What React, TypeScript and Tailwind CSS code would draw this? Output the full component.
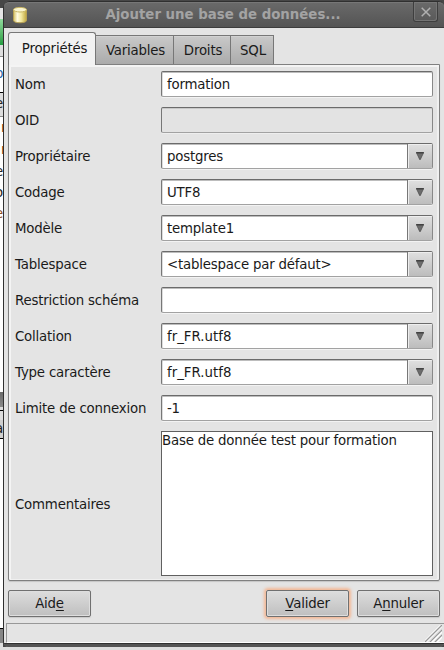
import React from "react";

const sans = "font-['DejaVu_Sans','Noto_Sans',sans-serif]";

function Label({ children, className = "pt-px" }: { children: React.ReactNode; className?: string }) {
  return <label className={`w-[146px] shrink-0 whitespace-nowrap ${className}`}>{children}</label>;
}

const box =
  "h-[26px] w-[272px] rounded-[2px] border border-t-[#6b6b6b] border-l-[#777] border-r-[#888] border-b-[#a2a2a2]";

function Field({
  label,
  value,
  disabled,
  combo,
  wide,
}: {
  label: string;
  value?: string;
  disabled?: boolean;
  combo?: boolean;
  wide?: boolean;
}) {
  return (
    <div className="flex h-[26px] items-center">
      <Label>{label}</Label>
      <div
        className={`${box} flex items-center overflow-hidden ${
          disabled
            ? "bg-[#e3e3e3] shadow-[0_1px_0_#eeeeee,inset_0_1px_0_#c8c8c8]"
            : "bg-white shadow-[0_1px_0_#f3f3f3,inset_0_1px_0_#bdbdbd,inset_1px_0_0_#dddddd]"
        }`}
      >
        <span className={`flex-1 whitespace-pre pt-px pl-[5px] ${wide ? "tracking-normal" : ""}`}>{value}</span>
        {combo && (
          <span className="flex h-full w-[25px] items-center justify-center border-l border-[#777] bg-linear-to-b from-[#e0e0e0] to-[#bcbcbc] shadow-[inset_1px_1px_0_#eeeeee]">
            <svg width="8" height="8" viewBox="0 0 8 8">
              <path d="M0 0h8L4.4 8h-.8z" fill="#6c6c6c" />
              <path d="M0 0h8l-.7 1.6H.7z" fill="#424242" />
              <path d="M.5 1L3.8 7.6M7.5 1L4.2 7.6" fill="none" stroke="#4d4d4d" strokeWidth=".6" />
            </svg>
          </span>
        )}
      </div>
    </div>
  );
}

function Tab({ children, className }: { children: React.ReactNode; className: string }) {
  return (
    <div
      className={`flex h-[29px] items-center justify-center border-t border-r border-[#777] bg-linear-to-b from-[#c9c9c9] to-[#ababab] pt-px pl-[2px] shadow-[inset_0_1px_0_#d2d2d2] ${className}`}
    >
      {children}
    </div>
  );
}

function Button({ children, focus, className = "" }: { children: React.ReactNode; focus?: boolean; className?: string }) {
  return (
    <button
      className={`h-[27px] w-[83px] rounded-[2px] border border-[#707070] bg-linear-to-b from-[#dddddd] to-[#bfbfbf] ${
        focus ? "shadow-[inset_0_0_0_1px_#dedede,0_0_3px_2px_#f3b896]" : "shadow-[inset_0_0_0_1px_#dedede,0_1px_1px_#c9c9c9]"
      } ${className}`}
    >
      {children}
    </button>
  );
}

const U = ({ children }: { children: React.ReactNode }) => (
  <span className="underline decoration-1 underline-offset-2">{children}</span>
);

/* Sliver of the window that lies behind the dialog. */
function Backdrop() {
  return (
    <div className="flex h-full w-[4px] shrink-0 flex-col overflow-hidden bg-white text-[#222]">
      <div className="h-[8px] shrink-0 bg-[#474747]" />
      <div className="h-[11px] shrink-0 bg-[#e5e5e5]" />
      <div className="h-[26px] shrink-0 bg-linear-to-b from-[#8fdb9d] to-[#1f9c3f]" />
      <div className="h-[12px] shrink-0 border-b border-[#888] bg-[#dedede]" />
      <div className="h-[36px] shrink-0 border-b border-black leading-[34px] text-[#2563a8]"><span className="-ml-[5px]">p</span></div>
      <div className="h-[24px] shrink-0 border-b border-[#888] bg-[#ddd] leading-[22px]"><span className="-ml-[5px]">e</span></div>
      <div className="h-[44px] shrink-0 leading-[22px] text-[#9a4a20]"><span className="ml-px block">r</span><span className="ml-px block">r</span></div>
      <div className="h-[231px] shrink-0 leading-[21px]"><span className="-ml-[5px] block">e</span><span className="-ml-[5px] block">o</span><span className="-ml-[5px] block text-[#8a4a20]">e</span></div>
      <div className="h-[15px] shrink-0 bg-linear-to-b from-[#6a6a6a] to-[#8a8a8a]" />
      <div className="h-[4px] shrink-0 border-b border-black bg-[#ddd]" />
      <div className="h-[9px] shrink-0 bg-[#ddd]" />
      <div className="h-[19px] shrink-0 border-b border-black bg-[#cfcfcf] leading-[17px]"><span className="-ml-[5px]">a</span></div>
      <div className="h-[189px] shrink-0" />
      <div className="h-[15px] shrink-0 border-t border-black bg-[#858585]" />
      <div className="flex-1 bg-[#dedede]" />
    </div>
  );
}

export default function App() {
  return (
    <div className={`${sans} flex h-[650px] w-[444px] overflow-hidden bg-[#dcdcdc] text-[13.33px] leading-4 tracking-[-0.19px] text-[#1a1a1a]`}>
      <Backdrop />
      <div className="-ml-px flex w-[441px] flex-col bg-[#474747]">
        <div className="mt-px flex h-[646px] flex-col rounded-t-[6px] rounded-b-[5px] border-l border-[#303030] bg-[#e4e4e4]">
          <header className="flex h-[27px] shrink-0 items-center rounded-t-[5px] border-t border-b border-t-[#303030] border-b-[#3c3c3c] bg-linear-to-b from-[#6a6a6a] to-[#545454] shadow-[inset_0_1px_0_#777]">
            <svg className="ml-[8px]" width="16" height="18" viewBox="0 0 16 18">
              <defs>
                <linearGradient id="cyl">
                  <stop offset="0" stopColor="#d2bd5c" />
                  <stop offset=".3" stopColor="#fffbe0" />
                  <stop offset=".6" stopColor="#f3e89f" />
                  <stop offset="1" stopColor="#bfa63e" />
                </linearGradient>
              </defs>
              <path d="M1.5 3.5v11c0 3 13 3 13 0v-11" fill="url(#cyl)" stroke="#b6a052" />
              <ellipse cx="8" cy="3.7" rx="6.5" ry="2.3" fill="#faf5cf" stroke="#c9b664" />
            </svg>
            <h1 className="flex-1 pl-[5px] text-center font-bold tracking-normal text-[#a3a3a3]">Ajouter une base de données...</h1>
            <button className="mr-[6px] mb-[5px] flex h-[20px] w-[25px] items-center justify-center rounded-b-[3px] border border-t-0 border-[#3e3e3e] shadow-[inset_-1px_-1px_0_#747474,inset_1px_0_0_#747474]">
              <svg width="10" height="10" viewBox="0 0 10 10"><path d="M.7.7l8.6 8.6M9.3.7L.7 9.3" stroke="#b0b0b0" strokeWidth="1.5" /></svg>
            </button>
          </header>
          <div className="z-10 ml-[4px] flex h-[37px] shrink-0 items-end">
            <div className="flex h-[33px] w-[88px] items-center justify-center rounded-t-[3px] border border-b-0 border-[#777] bg-[#f2f2f2] pb-px pl-[5px]">Propriétés</div>
            <div className="mb-px flex">
              <Tab className="w-[78px]">Variables</Tab>
              <Tab className="w-[57px]">Droits</Tab>
              <Tab className="w-[43px]">SQL</Tab>
            </div>
          </div>
          <main className="-mt-px ml-[4px] flex h-[517px] w-[432px] shrink-0 flex-col gap-[10px] rounded-b-[2px] border border-[#808080] pt-[6px] pl-[6px] shadow-[inset_2px_2px_0_#f4f4f4,inset_-2px_-1px_0_#f0f0f0,0_1px_1px_#c5c5c5]">
            <Field label="Nom" value="formation" />
            <Field label="OID" disabled />
            <Field label="Propriétaire" value="postgres" combo />
            <Field label="Codage" value="UTF8" combo />
            <Field label="Modèle" value="template1" combo />
            <Field label="Tablespace" value="<tablespace par défaut>" combo />
            <Field label="Restriction schéma" />
            <Field label="Collation" value="fr_FR.utf8" combo wide />
            <Field label="Type caractère" value="fr_FR.utf8" combo wide />
            <Field label="Limite de connexion" value="-1" />
            <div className="flex h-[145px] items-center">
              <Label className="pt-[3px]">Commentaires</Label>
              <div className="h-[145px] w-[272px] border border-[#606060] bg-white pt-px">Base de donnée test pour formation</div>
            </div>
          </main>
          <div className="mt-[9px] ml-[4px] flex shrink-0">
            <Button><span>Aid<U>e</U></span></Button>
            <Button focus className="ml-[175px]"><U>V</U>alider</Button>
            <Button className="ml-[8px]">A<U>n</U>nuler</Button>
          </div>
          <footer className="mt-[6px] ml-[2px] flex h-[20px] shrink-0 items-end justify-end border border-r-0 border-[#989898] border-b-white">
            <svg className="mr-[2px]" width="17" height="17" viewBox="0 0 17 17">
              <path d="M0 17L17 0M6 17L17 6M11 17l6-6" stroke="#fff" strokeWidth="3" />
              <path d="M0 17L17 0M5 17L17 5M10 17l7-7" stroke="#999" strokeWidth="1.3" />
            </svg>
          </footer>
          <div className="h-[4px] shrink-0 rounded-b-[4px] border-t border-[#303030] bg-[#555]" />
        </div>
        <div className="h-[3px] bg-[#dedede]" />
      </div>
    </div>
  );
}
